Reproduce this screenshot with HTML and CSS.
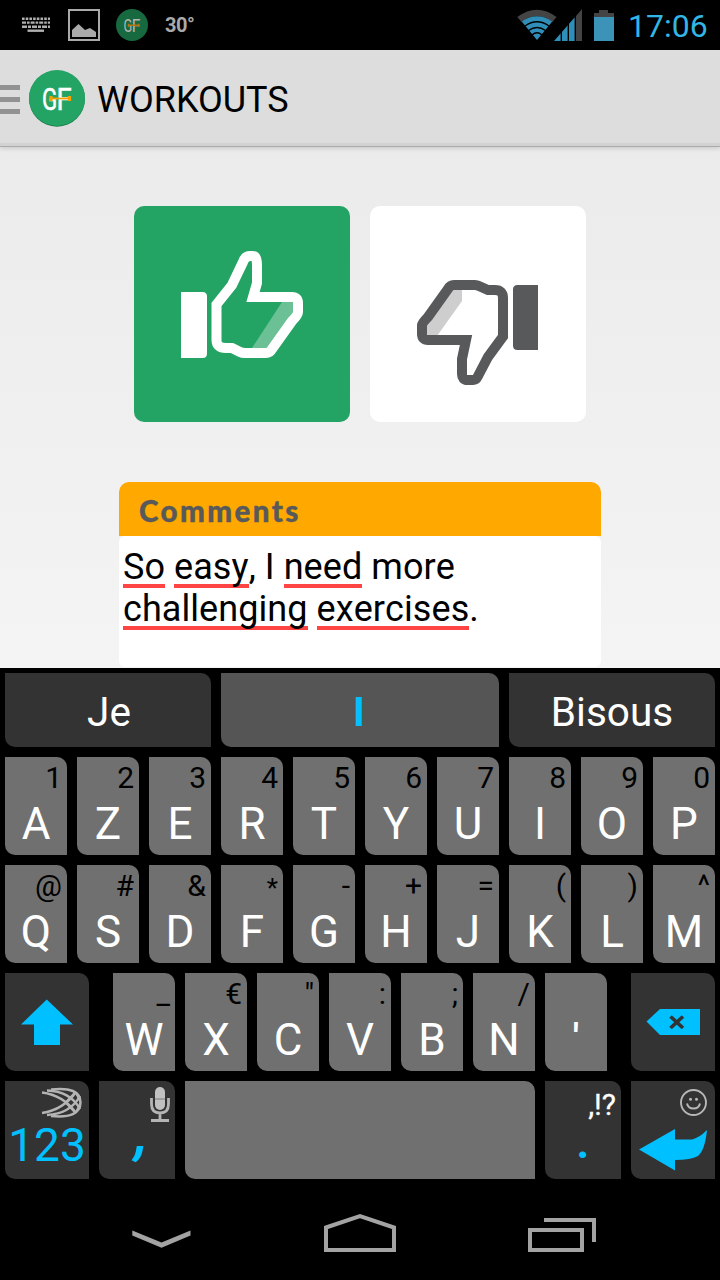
FILE: index.html
```html
<!DOCTYPE html>
<html lang="en">
<head>
<meta charset="utf-8">
<title>Workouts</title>
<link rel="stylesheet" href="styles.css">
</head>
<body>
<div class="screen">
  <div class="status">
    <svg class="s-keyboard" width="28" height="16" viewBox="0 0 28 16"><g fill="none" stroke="#b0b0b0" stroke-width="2.4"><path d="M0 1.7H28" stroke-dasharray="2.6 1.1"/><path d="M0 5.6H28" stroke-dasharray="4 1 2.6 1"/><path d="M0 9.7H28" stroke-dasharray="5 1 3 1"/><path d="M5.500 13.700H22"/></g></svg>
    <svg class="s-image" width="32" height="32" viewBox="0 0 32 32"><rect x="1" y="1" width="30" height="30" fill="none" stroke="#aaa" stroke-width="2"/><path d="M4 28V21L10.500 15L17 21L22 19L28 23V28Z" fill="#aaa"/></svg>
    <svg class="s-app" width="32" height="32" viewBox="0 0 56 56"><circle cx="28" cy="28" r="28" fill="#17693f"/><g class="mark" fill="#b5b5b5"><text transform="translate(13 39.500) scale(.7 1)">G</text><text transform="translate(27.500 39.500) scale(.86 1)">F</text></g><path d="M21 28.500H41M22 26V31M40 26V31" stroke="#b57412" stroke-width="2.500"/></svg>
    <span class="temp">30°</span>
    <svg class="s-wifi" width="40" height="32" viewBox="0 0 40 32"><path d="M.3 8Q20-6.500 39.500 8L35.500 13Q20 1 4.500 13Z" fill="#444"/><path d="M4.700 12.500Q20 2 35.300 12.500L20 31Z" fill="#308fb9"/><g fill="none" stroke="#000" stroke-width="1.500"><path d="M8 17Q20 8.500 32 17"/><path d="M11.500 21.500Q20 15.500 28.500 21.500"/><path d="M15 26Q20 21.500 25 26"/></g></svg>
    <svg class="s-signal" width="28" height="32" viewBox="0 0 28 32"><path d="M22 7L28 0V32H22Z" fill="#444"/><path d="M0 32L21 8V32Z" fill="#308fb9"/><path d="M7.300 20V32M14.300 13V32M21.300 5V32" stroke="#000" stroke-width="1.400"/></svg>
    <svg class="s-battery" width="20" height="31" viewBox="0 0 20 31"><path d="M0 3H5V0H14V3H20V7H0Z" fill="#444"/><path d="M0 7H20V31H0Z" fill="#3c93b8"/></svg>
    <span class="clock">17:06</span>
  </div>

  <div class="appbar">
    <div class="menu"><i></i><i></i><i></i></div>
    <svg class="logo" width="56" height="57" viewBox="0 0 56 57"><circle cx="28" cy="28.700" r="28" fill="#147444"/><circle cx="28" cy="28" r="28" fill="#24a464"/><g class="mark" fill="#fff" stroke="#fff" stroke-width=".5"><text transform="translate(13 39.800) scale(.7 1)">G</text><text transform="translate(27.500 39.800) scale(.86 1)">F</text></g><path d="M21 28.500H42" stroke="#f5a000" stroke-width="1.800"/><path d="M22 26V31M40.500 26V31" stroke="#f5a000" stroke-width="3.200"/></svg>
    <h1>WORKOUTS</h1>
  </div>

  <main class="content">
    <div class="votes">
      <div class="vote up"><svg width="216" height="216" viewBox="0 0 216 216"><path d="M47 86H68.500Q73 86 73 90.500V147.500Q73 152 68.500 152H47Z" fill="#fff"/><path d="M148 96H161L160 106L138 144L118 142Z" fill="#6bc096"/><path d="M82.500 98.500L98 79L109 56Q111 50 116 50H118.500Q123 50 123 59V77L119 91H158Q164 91 164 97V106Q164 109 158 115L138 143Q136 147 132 147H111Q108 147 106 146L98 142H92Q82.500 142 82.500 134Z" fill="none" stroke="#fff" stroke-width="10"/></svg></div>
      <div class="vote down"><svg width="216" height="216" viewBox="0 0 216 216"><path d="M168 79H147.500Q143 79 143 83.500V139.500Q143 144 147.500 144H168Z" fill="#58595b"/><path d="M57 129V113L78 83H92V95L67 130Z" fill="#cecece"/><path d="M133 130.500L118 151L107.500 171Q106 174 103 174H97.500Q92 174 92 168V153L96 134H58Q52 134 52 128V119Q52 117 58 111L78 83Q80 79 84 79H105Q107 79 109 80L118 84H125Q133 84 133 92Z" fill="none" stroke="#58595b" stroke-width="10"/></svg></div>
    </div>
    <section class="comments">
      <h2>Comments</h2>
      <div class="box"><p><u>So</u> <u>easy</u>, I <u>need</u> more<br><u>challenging</u> <u>exercises</u>.</p></div>
    </section>
  </main>

  <div class="keyboard">
    <div class="suggest"><div class="dark">Je</div><div class="current">I</div><div class="dark">Bisous</div></div>
    <div class="row">
      <div class="key"><small>1</small><b>A</b></div><div class="key"><small>2</small><b>Z</b></div><div class="key"><small>3</small><b>E</b></div><div class="key"><small>4</small><b>R</b></div><div class="key"><small>5</small><b>T</b></div><div class="key"><small>6</small><b>Y</b></div><div class="key"><small>7</small><b>U</b></div><div class="key"><small>8</small><b>I</b></div><div class="key"><small>9</small><b>O</b></div><div class="key"><small>0</small><b>P</b></div>
    </div>
    <div class="row">
      <div class="key"><small>@</small><b>Q</b></div><div class="key"><small>#</small><b>S</b></div><div class="key"><small>&amp;</small><b>D</b></div><div class="key"><small class="star">*</small><b>F</b></div><div class="key"><small>-</small><b>G</b></div><div class="key"><small>+</small><b>H</b></div><div class="key"><small>=</small><b>J</b></div><div class="key"><small>(</small><b>K</b></div><div class="key"><small>)</small><b>L</b></div><div class="key"><small>^</small><b>M</b></div>
    </div>
    <div class="row third">
      <div class="key dark wide"><svg width="84" height="98" viewBox="0 0 84 98"><path d="M41.700 26.500L68 51.500H55V72H29V51.500H16Z" fill="#00c0ff"/></svg></div>
      <div class="letters">
        <div class="key"><small>_</small><b>W</b></div><div class="key"><small>€</small><b>X</b></div><div class="key"><small>"</small><b>C</b></div><div class="key"><small>:</small><b>V</b></div><div class="key"><small>;</small><b>B</b></div><div class="key"><small>/</small><b>N</b></div><div class="key quote"><small>&nbsp;</small><b>'</b></div>
      </div>
      <div class="key dark wide"><svg width="84" height="98" viewBox="0 0 84 98"><path d="M15.500 48.500L29 36H69V62H29Z" fill="#00c0ff"/><path d="M39.500 43.500L52 55M52 43.500L39.500 55" stroke="#333" stroke-width="3.600"/></svg></div>
    </div>
    <div class="row">
      <div class="key dark wide num"><svg width="84" height="42" viewBox="0 0 84 42"><g fill="none" stroke="#b4b4b4" stroke-width="2.500"><path d="M37 11.500Q58 14 71 32"/><path d="M37 32Q58 29 71 11"/><path d="M42 9.500Q65 10 75 28"/><path d="M42 34Q65 33 75 15"/><path d="M46 8.500Q75 5 75.500 21.500Q75 38 46 35"/></g><path d="M60 21.500L70 11L75.500 21.500L70 32Z" fill="none" stroke="#b4b4b4" stroke-width="1.200"/></svg><b>123</b></div>
      <div class="key dark comma"><svg width="76" height="42" viewBox="0 0 76 42"><rect x="56" y="6" width="10" height="23" rx="5" fill="#c0c0c0"/><path d="M52.500 17V23Q52.500 32 61 32Q69.500 32 69.500 23V17M61 32V39M52 39.500H70" fill="none" stroke="#b4b4b4" stroke-width="2.800"/><path d="M56 18H66" stroke="#888" stroke-width="1.300"/></svg><b>,</b></div>
      <div class="key space"></div>
      <div class="key dark dot"><small>,!?</small><b>.</b></div>
      <div class="key dark wide"><svg width="84" height="98" viewBox="0 0 84 98"><g fill="none" stroke="#b8b8b8" stroke-width="1.900"><circle cx="62.500" cy="21.500" r="12.500"/><path d="M56 22.500Q57 27.500 62.500 27.500Q68 27.500 69 22.500"/></g><circle cx="59.500" cy="18.300" r="1.500" fill="#b8b8b8"/><circle cx="65.500" cy="18.300" r="1.500" fill="#b8b8b8"/><path d="M8 68.500L44 48V58.500H61Q68 57 76 49Q74 69 67 75Q60 79 44 79V89.500Z" fill="#00c0ff"/></svg></div>
    </div>
  </div>

  <nav class="navbar">
    <svg width="60" height="40" viewBox="0 0 60 40"><path d="M1.300 18.500L30.500 30.500L59.500 18.500V23.500L30.500 35.700L1.300 23.500Z" fill="#a3a3a3"/></svg>
    <svg width="72" height="40" viewBox="0 0 72 40"><path d="M2 15.500L36 4L70 15.500V38H2Z" fill="none" stroke="#a3a3a3" stroke-width="4"/></svg>
    <svg width="68" height="40" viewBox="0 0 68 40"><path d="M2 18H54V38H2ZM16 8H66V30" fill="none" stroke="#a3a3a3" stroke-width="4"/></svg>
  </nav>
</div>
</body>
</html>
```
FILE: styles.css
```css
* { box-sizing: border-box; }
body { margin: 0; background: #000; font-family: Roboto, "Noto Sans", sans-serif; }
svg { display: block; flex: none; }
.screen { width: 720px; height: 1280px; display: flex; flex-direction: column; overflow: hidden; }

.status { height: 50px; flex: none; display: flex; align-items: center; padding-left: 22px; background: #000; }
.s-image { margin-left: 18px; }
.s-app { margin-left: 16px; }
.temp { margin-left: 17px; width: 352px; font-weight: 700; font-size: 20px; letter-spacing: -.5px; color: #aaa; }
.s-wifi { margin-left: 0; }
.s-signal { margin-left: -3px; }
.s-battery { margin-left: 12px; }
.clock { margin: 1px 0 0 14px; font-size: 32px; color: #33b5e5; }
.mark { font: 32px Roboto, sans-serif; }

.appbar { height: 97px; flex: none; display: flex; align-items: center; background: #ddd; border-bottom: 1px solid #aaa; box-shadow: inset 0 -3px #d2d2d2, 0 2px 4px rgba(0,0,0,.12); z-index: 1; }
.menu { width: 20px; height: 29px; display: flex; flex-direction: column; justify-content: space-between; margin-top: 3px; }
.menu i { height: 5px; background: #929292; }
.logo { margin: 0 0 0 9px; }
h1 { margin: 3px 0 0 12px; font-size: 36px; font-weight: 400; line-height: 42px; color: #000; }

.content { height: 521px; flex: none; padding-top: 59px; background: linear-gradient(#ebebeb, #f4f4f4); overflow: hidden; }
.votes { display: flex; justify-content: center; gap: 20px; }
.vote { width: 216px; height: 216px; border-radius: 10px; }
.up { background: #24a464; }
.down { background: #fff; }
.comments { width: 482px; margin: 60px auto 0; }
h2 { margin: 0; height: 54px; padding-left: 20px; border-radius: 10px 10px 0 0; background: #ffa800; color: #58595b; font: 900 29.5px/58px Lato, sans-serif; letter-spacing: 2.4px; -webkit-text-stroke: .4px #58595b; }
.box { height: 131px; padding: 10px 4px; background: #fff; border-radius: 6px; }
p { margin: 0; font-size: 36px; line-height: 42px; letter-spacing: .07px; color: #000; white-space: nowrap; font-kerning: none; }
u { text-decoration: none; background: linear-gradient(#ff4444, #ff4444) 0 100% / 100% 4px no-repeat; }

.keyboard { height: 522px; flex: none; padding: 5px 5px 0; display: flex; flex-direction: column; gap: 10px; background: #000; }
.suggest { height: 74px; display: grid; grid-template: 74px / 206px 278px 206px; gap: 10px; font-size: 40.5px; line-height: 79px; text-align: center; color: #fff; }
.suggest div { border-radius: 0 10px 0 10px; overflow: hidden; }
.suggest div:first-child { padding-left: 2px; }
.suggest .current { padding-right: 2px; background: #555; color: #00c0ff; font-weight: 700; }
.row { height: 98px; display: flex; gap: 10px; }
.third { justify-content: space-between; }
.letters { display: flex; gap: 10px; }
.key { width: 62px; height: 98px; display: flex; flex-direction: column; border-radius: 0 10px 0 10px; background: #707070; color: #fff; }
.key small { height: 30px; margin: 6px 5px 9px 0; font-size: 30px; line-height: 30px; text-align: right; color: #000; }
.key small.star { font-size: 26px; line-height: 34px; }
.key b { font-weight: 400; font-size: 44px; line-height: 44px; text-align: center; }
.dark { background: #333 !important; }
.wide { width: 84px; }
.key.comma, .key.dot { width: 76px; }
.key.space { width: 350px; }
.num b { font-size: 46px; color: #00c0ff; }
.quote b { font-weight: 700; font-size: 36px; line-height: 40px; }
.comma b { margin-top: -11px; padding-left: 9px; font-size: 56px; font-weight: 700; font-style: italic; color: #00c0ff; }
.dot b { margin-top: -5px; font-weight: 700; color: #00c0ff; }
.key.dot small { margin-top: 9px; margin-bottom: 6px; color: #fff; -webkit-text-stroke: .3px #fff; }

.navbar { height: 90px; flex: none; display: flex; padding: 22px 124px 0 131px; justify-content: space-between; background: #000; }
```
